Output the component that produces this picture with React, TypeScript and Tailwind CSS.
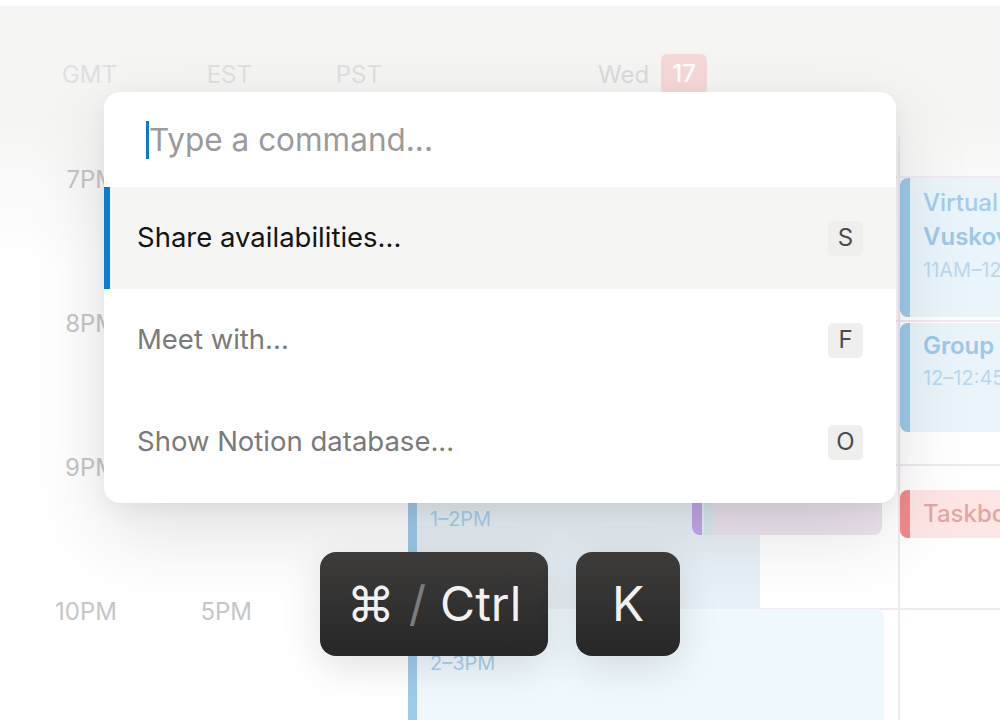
import { ReactNode } from "react";

const hours = ["7PM", "8PM", "9PM", "10PM"];
const est = ["2PM", "3PM", "4PM", "5PM"];

function TimeColumn({ label, width, times }: { label: string; width: string; times?: string[] }) {
  return (
    <div className={`${width} flex shrink-0 flex-col items-end pr-[13px]`}>
      <div className="flex h-[130px] shrink-0 items-start pt-[55px] text-[24px] leading-[28px] text-[#e0e0df]">{label}</div>
      <div className="flex shrink-0 flex-col items-end pt-[30px]">
        {times?.map((t) => (
          <div key={t} className="h-[144px] shrink-0 text-[24px] leading-[28px] text-[#c6c6c6]">
            {t}
          </div>
        ))}
      </div>
    </div>
  );
}

function GridLines() {
  return (
    <div className="flex flex-col pt-[40px]">
      {hours.map((h) => (
        <div key={h} className="h-[144px] shrink-0 border-t-2 border-[#f2e9f2]" />
      ))}
    </div>
  );
}

function Kbd({ children }: { children: ReactNode }) {
  return (
    <span className="flex h-[35px] w-[35px] items-center justify-center rounded-[5px] bg-[#efefee] text-[24px] text-[#4b4b4b]">
      {children}
    </span>
  );
}

const commands = [
  { label: "Share availabilities...", key: "S", active: true },
  { label: "Meet with...", key: "F", active: false },
  { label: "Show Notion database...", key: "O", active: false },
];

const headBg = "bg-gradient-to-b from-[#f5f5f4] from-[0px] via-[#f5f5f4] via-[110px] to-white to-[260px]";

export default function App() {
  return (
    <div className="relative h-[720px] w-[1000px] overflow-hidden bg-white pt-[6px] font-[Inter,sans-serif]">
      {/* calendar behind */}
      <div className="flex h-full">
        <div className={`flex ${headBg}`}>
          <TimeColumn label="GMT" width="w-[130px]" times={hours} />
          <TimeColumn label="EST" width="w-[135px]" times={est} />
          <TimeColumn label="PST" width="w-[130px]" />
        </div>

        {/* Wed column */}
        <div className={`flex w-[505px] shrink-0 flex-col ${headBg}`}>
          <div className="flex h-[130px] shrink-0 items-start gap-[12px] pl-[203px] pt-[48px]">
            <span className="pt-[7px] text-[24px] leading-[28px] text-[#dbdbdb]">Wed</span>
            <span className="flex h-[40px] w-[46px] items-center justify-center rounded-[6px] bg-[#f5d9d9] text-[24px] font-medium text-white">
              17
            </span>
          </div>
          <div className="relative flex-1 border-r-2 border-[#f2e9f2]">
            <GridLines />
            <div className="absolute left-[13px] top-[332px] flex h-[141px] w-[352px] rounded-tl-[8px] bg-[#e8f1f7]">
              <div className="w-[9px] shrink-0 bg-[#9ecbea]" />
              <div className="pl-[13px] pt-[39px] text-[20px] leading-[24px] text-[#a8d0ec]">1–2PM</div>
            </div>
            <div className="absolute left-[297px] top-[300px] flex h-[99px] w-[190px] overflow-hidden rounded-b-[8px]">
              <div className="w-[10px] shrink-0 bg-[#c4a6ea]" />
              <div className="ml-[2px] w-[9px] shrink-0 bg-[#dbeaf3]" />
              <div className="flex-1 bg-[#ede4ef]" />
            </div>
            <div className="absolute left-[13px] right-[14px] top-[473px] flex h-[200px] rounded-tr-[8px] bg-[#eff8fd]">
              <div className="w-[9px] shrink-0 bg-[#9ecbea]" />
              <div className="pl-[13px] pt-[42px] text-[20px] leading-[24px] text-[#a8d0ec]">2–3PM</div>
            </div>
          </div>
        </div>

        {/* next day column */}
        <div className={`flex w-[100px] shrink-0 flex-col ${headBg}`}>
          <div className="h-[130px] shrink-0" />
          <div className="relative flex-1">
            <GridLines />
            <div className="absolute left-0 top-[42px] flex h-[139px] w-[140px] overflow-hidden rounded-l-[8px] bg-[#eaf4fb]">
              <div className="w-[10px] shrink-0 bg-[#9ecbea]" />
              <div className="flex flex-col whitespace-nowrap pl-[13px] pt-[8px]">
                <span className="text-[24px] font-medium leading-[34px] text-[#a2cdeb]">Virtual</span>
                <span className="text-[24px] font-semibold leading-[34px] text-[#9cc9ea]">Vuskov</span>
                <span className="text-[20px] leading-[32px] text-[#b9d8ee]">11AM–12PM</span>
              </div>
            </div>
            <div className="absolute left-0 top-[187px] flex h-[109px] w-[140px] overflow-hidden rounded-l-[8px] bg-[#eaf4fb]">
              <div className="w-[10px] shrink-0 bg-[#9ecbea]" />
              <div className="flex flex-col whitespace-nowrap pl-[13px] pt-[6px]">
                <span className="text-[24px] font-semibold leading-[34px] text-[#9cc9ea]">Group</span>
                <span className="text-[20px] leading-[30px] text-[#b9d8ee]">12–12:45PM</span>
              </div>
            </div>
            <div className="absolute left-0 top-[354px] flex h-[48px] w-[140px] overflow-hidden rounded-l-[8px] bg-[#fde6e3]">
              <div className="w-[10px] shrink-0 bg-[#f18b8c]" />
              <div className="flex items-center whitespace-nowrap pl-[13px] text-[24px] font-medium text-[#e3a6a3]">Taskboard</div>
            </div>
          </div>
        </div>
      </div>

      {/* command palette */}
      <div className="absolute inset-0 flex flex-col items-center pt-[92px]">
        <div className="w-[792px] overflow-hidden rounded-[16px] bg-white pb-[10px] shadow-[0_30px_80px_rgba(0,0,0,0.12),0_6px_20px_rgba(0,0,0,0.05)]">
          <div className="flex h-[95px] items-center pl-[42px]">
            <span className="h-[38px] w-[3px] bg-[#0a7bd0]" />
            <span className="text-[31.5px] leading-[38px] text-[#9b9b9b]">Type a command...</span>
          </div>
          {commands.map((c) => (
            <div
              key={c.key}
              className={
                c.active
                  ? "flex h-[102px] items-center justify-between border-l-[6px] border-[#0b7dd0] bg-[#f5f5f4] pl-[27px] pr-[33px]"
                  : "flex h-[102px] items-center justify-between pl-[33px] pr-[33px]"
              }
            >
              <span className={c.active ? "text-[27.5px] text-[#141414]" : "text-[27.5px] text-[#7a7a7a]"}>{c.label}</span>
              <Kbd>{c.key}</Kbd>
            </div>
          ))}
        </div>

        <div className="mt-[49px] flex gap-[28px]">
          <div className="flex h-[104px] w-[228px] items-center justify-center gap-[14px] rounded-[16px] bg-gradient-to-b from-[#3d3c3b] to-[#282727] text-[48px] text-[#f1f1f1] shadow-[0_10px_40px_rgba(0,0,0,0.12)]">
            <span>⌘</span>
            <span className="text-[#7c7c7c]">/</span>
            <span>Ctrl</span>
          </div>
          <div className="flex h-[104px] w-[104px] items-center justify-center rounded-[16px] bg-gradient-to-b from-[#3d3c3b] to-[#282727] text-[48px] text-[#f1f1f1] shadow-[0_10px_40px_rgba(0,0,0,0.12)]">
            K
          </div>
        </div>
      </div>
    </div>
  );
}
